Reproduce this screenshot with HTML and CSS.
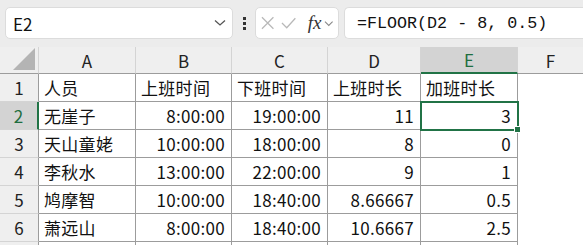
FILE: index.html
```html
<!DOCTYPE html>
<html lang="zh-CN">
<head>
<meta charset="UTF-8">
<title>Sheet</title>
<link rel="stylesheet" href="styles.css">
</head>
<body>
<div class="toolbar">
  <div class="namebox">
    <span>E2</span>
    <svg class="chev" width="12" height="8" viewBox="0 0 12 8"><path d="M1 1.5 L6 6 L11 1.5" fill="none" stroke="#555" stroke-width="1.3"/></svg>
  </div>
  <div class="dots"><i></i><i></i><i></i></div>
  <div class="fnbox">
    <svg width="14" height="14" viewBox="0 0 14 14"><path d="M1 1 L13 13 M13 1 L1 13" stroke="#b8b8b8" stroke-width="1.3"/></svg>
    <svg width="16" height="12" viewBox="0 0 16 12"><path d="M1 6 L6 11 L15 1" fill="none" stroke="#b8b8b8" stroke-width="1.3"/></svg>
    <span class="fx">fx</span>
    <svg width="10" height="7" viewBox="0 0 10 7"><path d="M1 1.5 L5 5.5 L9 1.5" fill="none" stroke="#888" stroke-width="1.1"/></svg>
  </div>
  <div class="formula">=FLOOR(D2 - 8, 0.5)</div>
</div>
<div class="sheet">
  <div class="hd corner"><svg width="22" height="22" viewBox="0 0 22 22"><path d="M22 0 L22 22 L0 22 Z" fill="#b4b4b4"/></svg></div>
  <div class="hd">A</div><div class="hd">B</div><div class="hd">C</div><div class="hd">D</div><div class="hd sel-col">E</div><div class="hd last">F</div>

  <div class="rh">1</div>
  <div class="c">人员</div><div class="c">上班时间</div><div class="c">下班时间</div><div class="c">上班时长</div><div class="c">加班时长</div><div class="blank"></div>

  <div class="rh sel-row">2</div>
  <div class="c">无崖子</div><div class="c n">8:00:00</div><div class="c n">19:00:00</div><div class="c n">11</div><div class="c n active">3<span class="handle"></span></div><div class="blank"></div>

  <div class="rh">3</div>
  <div class="c">天山童姥</div><div class="c n">10:00:00</div><div class="c n">18:00:00</div><div class="c n">8</div><div class="c n">0</div><div class="blank"></div>

  <div class="rh">4</div>
  <div class="c">李秋水</div><div class="c n">13:00:00</div><div class="c n">22:00:00</div><div class="c n">9</div><div class="c n">1</div><div class="blank"></div>

  <div class="rh">5</div>
  <div class="c">鸠摩智</div><div class="c n">10:00:00</div><div class="c n">18:40:00</div><div class="c n">8.66667</div><div class="c n">0.5</div><div class="blank"></div>

  <div class="rh">6</div>
  <div class="c">萧远山</div><div class="c n">8:00:00</div><div class="c n">18:40:00</div><div class="c n">10.6667</div><div class="c n">2.5</div><div class="blank"></div>

  <div class="rh"></div>
  <div class="c"></div><div class="c"></div><div class="c"></div><div class="c"></div><div class="c"></div><div class="blank"></div>
</div>
</body>
</html>
```

FILE: styles.css
```css
body {
    margin: 0;
    font-family: "Noto Sans CJK SC", "Noto Sans", sans-serif;
    color: #111;
    background: #fff;
    overflow: hidden;
}
.toolbar {
    height: 47px;
    background: #ececec;
    display: flex;
    align-items: center;
    padding: 0 0 1px 5px;
    box-sizing: border-box;
}
.namebox {
    width: 228px;
    height: 32px;
    box-sizing: border-box;
    background: #fff;
    border: 1px solid #dcdcdc;
    border-radius: 5px;
    display: flex;
    align-items: center;
    justify-content: space-between;
    padding: 0 6px 0 7px;
    font-size: 17px;
}
.dots {
    width: 22px;
    display: flex;
    flex-direction: column;
    align-items: center;
    gap: 2px;
}
.dots i {
    width: 3px;
    height: 3px;
    background: #333;
}
.fnbox {
    width: 84px;
    height: 32px;
    box-sizing: border-box;
    background: #fff;
    border: 1px solid #dcdcdc;
    border-radius: 5px;
    display: flex;
    align-items: center;
    padding: 0 4px 0 5px;
    gap: 7px;
}
.fx {
    font-family: "Liberation Serif", serif;
    font-style: italic;
    font-size: 19px;
    color: #333;
    margin-left: 4px;
    margin-right: -4px;
}
.formula {
    flex: 1;
    margin-left: 5px;
    height: 32px;
    background: #fff;
    border: 1px solid #dcdcdc;
    border-right: none;
    border-radius: 5px 0 0 5px;
    box-sizing: border-box;
    display: flex;
    align-items: center;
    padding-left: 12px;
    font-family: "Liberation Mono", "DejaVu Sans Mono", monospace;
    font-size: 16.7px;
    color: #111;
    white-space: pre;
}
.sheet {
    display: grid;
    grid-template-columns: 39px 97px 96px 96px 93px 97px 1fr;
    grid-template-rows: 27px repeat(7, 28px);
    font-size: 17px;
}
.hd, .rh {
    background: #efefef;
    color: #222;
    box-sizing: border-box;
    border-right: 1px solid #d4d4d4;
    border-bottom: 1px solid #9c9c9c;
    display: flex;
    align-items: center;
    justify-content: center;
}
.hd.last {
    border-right: none;
}
.corner {
    justify-content: flex-end;
    align-items: flex-end;
    padding: 0 3px 3px 0;
}
.rh {
    border-right: 1px solid #9c9c9c;
    border-bottom: 1px solid #d4d4d4;
}
.sel-col {
    background: #d3d3d3;
    color: #1e6e3f;
    border-bottom: 2px solid #217346;
}
.sel-row {
    background: #d3d3d3;
    color: #1e6e3f;
    border-right: 2px solid #217346;
}
.c {
    box-sizing: border-box;
    border-right: 1px solid #9c9c9c;
    border-bottom: 1px solid #9c9c9c;
    display: flex;
    align-items: center;
    padding: 0 6px 1px 5px;
    white-space: nowrap;
    letter-spacing: 0.3px;
}
.n {
    justify-content: flex-end;
}
.active {
    position: relative;
    outline: 2px solid #217346;
    outline-offset: -1px;
    z-index: 1;
}
.handle {
    position: absolute;
    right: -4px;
    bottom: -4px;
    width: 5px;
    height: 5px;
    background: #217346;
    border: 1px solid #fff;
}
.blank {
    background: #fff;
}
```
